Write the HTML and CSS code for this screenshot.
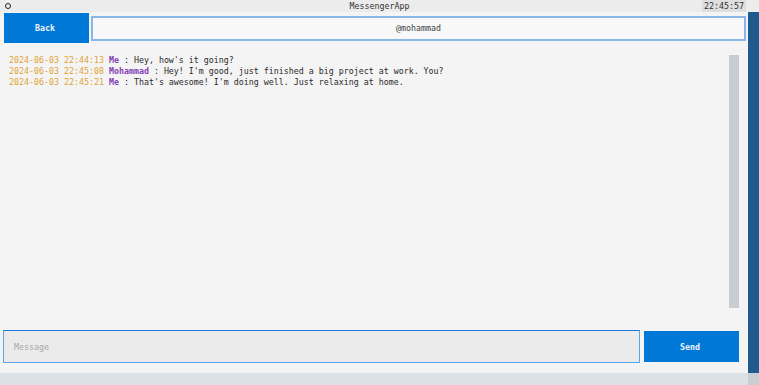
FILE: index.html
```html
<!DOCTYPE html>
<html>
<head>
<meta charset="utf-8">
<link rel="stylesheet" href="styles.css">
</head>
<body>
<div class="topbar">
  <div class="topleft"><span class="ring"></span></div>
  <div class="title">MessengerApp</div>
  <div class="clock">22:45:57</div>
</div>
<div class="middle">
  <div class="app">
    <div class="header">
      <button class="btn back">Back</button>
      <div class="user">@mohammad</div>
    </div>
    <div class="chat">
      <div class="messages">
        <div class="msg"><span class="ts">2024-06-03 22:44:13</span> <span class="who">Me</span> : Hey, how's it going?</div>
        <div class="msg"><span class="ts">2024-06-03 22:45:08</span> <span class="who">Mohammad</span> : Hey! I'm good, just finished a big project at work. You?</div>
        <div class="msg"><span class="ts">2024-06-03 22:45:21</span> <span class="who">Me</span> : That's awesome! I'm doing well. Just relaxing at home.</div>
      </div>
      <div class="scrollbar"></div>
    </div>
    <div class="composer">
      <div class="input">Message</div>
      <button class="btn send">Send</button>
    </div>
  </div>
  <div class="side"></div>
</div>
<div class="bottom">
  <div class="bleft"></div>
  <div class="bright"></div>
</div>
</body>
</html>
```
FILE: styles.css
```css
html, body {
  margin: 0;
  padding: 0;
  width: 759px;
  height: 385px;
  overflow: hidden;
  font-family: "DejaVu Sans Mono", monospace;
  font-size: 8.3px;
  background: #f4f4f4;
}
.topbar {
  height: 12px;
  background: #ececec;
  display: grid;
  grid-template-columns: 1fr auto 1fr;
  align-items: center;
  color: #333;
}
.topleft { display: flex; align-items: center; padding-left: 5px; }
.ring {
  width: 4px;
  height: 4px;
  border: 1.4px solid #222;
  border-radius: 50%;
}
.title { text-align: center; }
.clock {
  justify-self: end;
  margin-right: 13px;
  background: #dedede;
  padding: 0 2px;
  height: 12px;
  line-height: 12px;
}
.middle {
  display: flex;
  height: 361px;
}
.app {
  width: 748px;
  background: #f4f4f4;
  display: flex;
  flex-direction: column;
}
.side {
  width: 11px;
  background: #1f5a8f;
}
.header {
  display: flex;
  gap: 2px;
  margin-top: 1px;
  height: 30px;
  padding-left: 4px;
  padding-right: 2px;
  align-items: center;
}
.btn {
  border: none;
  background: #0078d7;
  color: #f0f4fa;
  font-family: "DejaVu Sans Mono", monospace;
  font-size: 8.3px;
  font-weight: bold;
  padding: 0 3px 0 0;
}
.back {
  width: 85px;
  height: 30px;
}
.user {
  flex: 1;
  height: 21px;
  border: 2px solid #8ab6ea;
  background: #f8f8f8;
  display: flex;
  align-items: center;
  justify-content: center;
  color: #444;
}
.chat {
  flex: 1;
  display: flex;
  padding-top: 12px;
  padding-left: 9px;
  padding-right: 9px;
  min-height: 0;
}
.messages {
  flex: 1;
  color: #2a2a2a;
  line-height: 11px;
}
.msg { white-space: pre; }
.ts { color: #e2a235; }
.who { color: #8440b4; font-weight: bold; }
.scrollbar {
  width: 10px;
  height: 253px;
  background: #c9cdd1;
}
.composer {
  display: flex;
  align-items: center;
  gap: 4px;
  padding-left: 3px;
  padding-right: 9px;
  height: 33px;
  margin-bottom: 10px;
}
.input {
  background: #ebebeb;
  border: 1px solid #5aa4ec;
  border-top-color: #1878dc;
  color: #a8a8a8;
  display: flex;
  align-items: center;
  padding-left: 10px;
  box-sizing: border-box;
  width: 637px;
  height: 33px;
}
.send {
  width: 95px;
  height: 31px;
}
.bottom {
  display: flex;
  height: 12px;
}
.bleft { width: 748px; background: #dce1e6; }
.bright { width: 11px; background: #c9ced4; }
```
